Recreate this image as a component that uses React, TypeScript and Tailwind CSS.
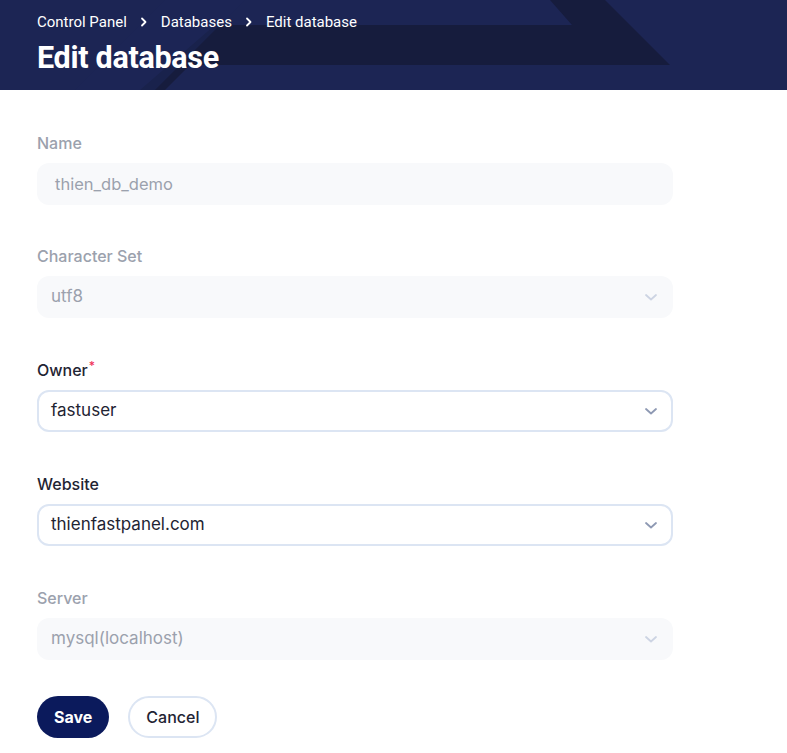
import React from "react";

function Chevron({ muted }: { muted?: boolean }) {
  return (
    <svg
      width="16"
      height="16"
      viewBox="0 0 16 16"
      fill="none"
      className={muted ? "text-[#cdd4e3]" : "text-[#8e99b3]"}
    >
      <path d="M3 6l5 4.5L13 6" stroke="currentColor" strokeWidth="1.8" strokeLinecap="round" strokeLinejoin="round" />
    </svg>
  );
}

function Crumb() {
  return (
    <svg width="8" height="10" viewBox="0 0 8 10" fill="none" className="text-white">
      <path d="M2 1.5L5.5 5L2 8.5" stroke="currentColor" strokeWidth="1.8" strokeLinecap="round" strokeLinejoin="round" />
    </svg>
  );
}

function Field({
  label,
  required,
  disabled,
  className,
  children,
}: {
  label: string;
  required?: boolean;
  disabled?: boolean;
  className?: string;
  children: React.ReactNode;
}) {
  return (
    <div className={"flex flex-col " + (className ?? "")}>
      <label
        className={
          disabled
            ? "text-base leading-6 font-medium text-[#9ba1ad] mb-2"
            : "text-base leading-6 font-medium text-[#1f2433] mb-2"
        }
      >
        {label}
        {required ? <span className="text-[#f0325a] text-xs align-top ml-px">*</span> : undefined}
      </label>
      {children}
    </div>
  );
}

function Select({ value, disabled }: { value: string; disabled?: boolean }) {
  return (
    <div
      className={
        disabled
          ? "h-[42px] rounded-xl bg-[#f8f9fb] flex items-center justify-between pl-[14px] pr-[14px] text-[17px] text-[#9ba1ad]"
          : "h-[42px] rounded-xl bg-white border-2 border-[#dce5f3] flex items-center justify-between pl-[12px] pr-[12px] text-[17px] text-[#1f2433]"
      }
    >
      <span>{value}</span>
      <Chevron muted={disabled} />
    </div>
  );
}

export default function App() {
  return (
    <div className="min-h-screen bg-white font-['Inter',sans-serif]">
      <header className="relative h-[90px] bg-[#1c2554] overflow-hidden font-['Roboto',sans-serif]">
        <svg className="absolute inset-0" width="787" height="90" viewBox="0 0 787 90">
          <polygon
            points="215,25 572,25 550,0 605,0 670,65 190,65 165,90 140,90"
            fill="#161c3d"
          />
          <polygon points="75,90 165,0 245,0 155,90" fill="#1d2657" opacity="0.6" />
        </svg>
        <div className="relative px-[37px] pt-[12px]">
          <nav className="flex items-center gap-[13px] text-[15px] leading-5 text-white">
            <span>Control Panel</span>
            <Crumb />
            <span>Databases</span>
            <Crumb />
            <span>Edit database</span>
          </nav>
          <h1 className="mt-[8px] text-[30.5px] leading-9 font-bold text-white tracking-[-0.3px]">
            Edit database
          </h1>
        </div>
      </header>

      <form className="px-[37px] pt-[41px] w-[710px] flex flex-col gap-[40px]">
        <Field label="Name" disabled>
          <div className="h-[42px] rounded-xl bg-[#f8f9fb] flex items-center px-[18px] text-[16.5px] text-[#9ba1ad]">
            thien_db_demo
          </div>
        </Field>
        <Field label="Character Set" disabled className="-mt-px">
          <Select value="utf8" disabled />
        </Field>
        <Field label="Owner" required>
          <Select value="fastuser" />
        </Field>
        <Field label="Website">
          <Select value="thienfastpanel.com" />
        </Field>
        <Field label="Server" disabled>
          <Select value="mysql(localhost)" disabled />
        </Field>
        <div className="flex gap-[19px] -mt-[4px]">
          <button
            type="button"
            className="h-[42px] px-[17px] rounded-full bg-[#0b1a5c] text-white text-base font-bold"
          >
            Save
          </button>
          <button
            type="button"
            className="h-[42px] px-[16px] rounded-full border-2 border-[#dce5f3] bg-white text-[#1f2433] text-base font-medium"
          >
            Cancel
          </button>
        </div>
      </form>
    </div>
  );
}
